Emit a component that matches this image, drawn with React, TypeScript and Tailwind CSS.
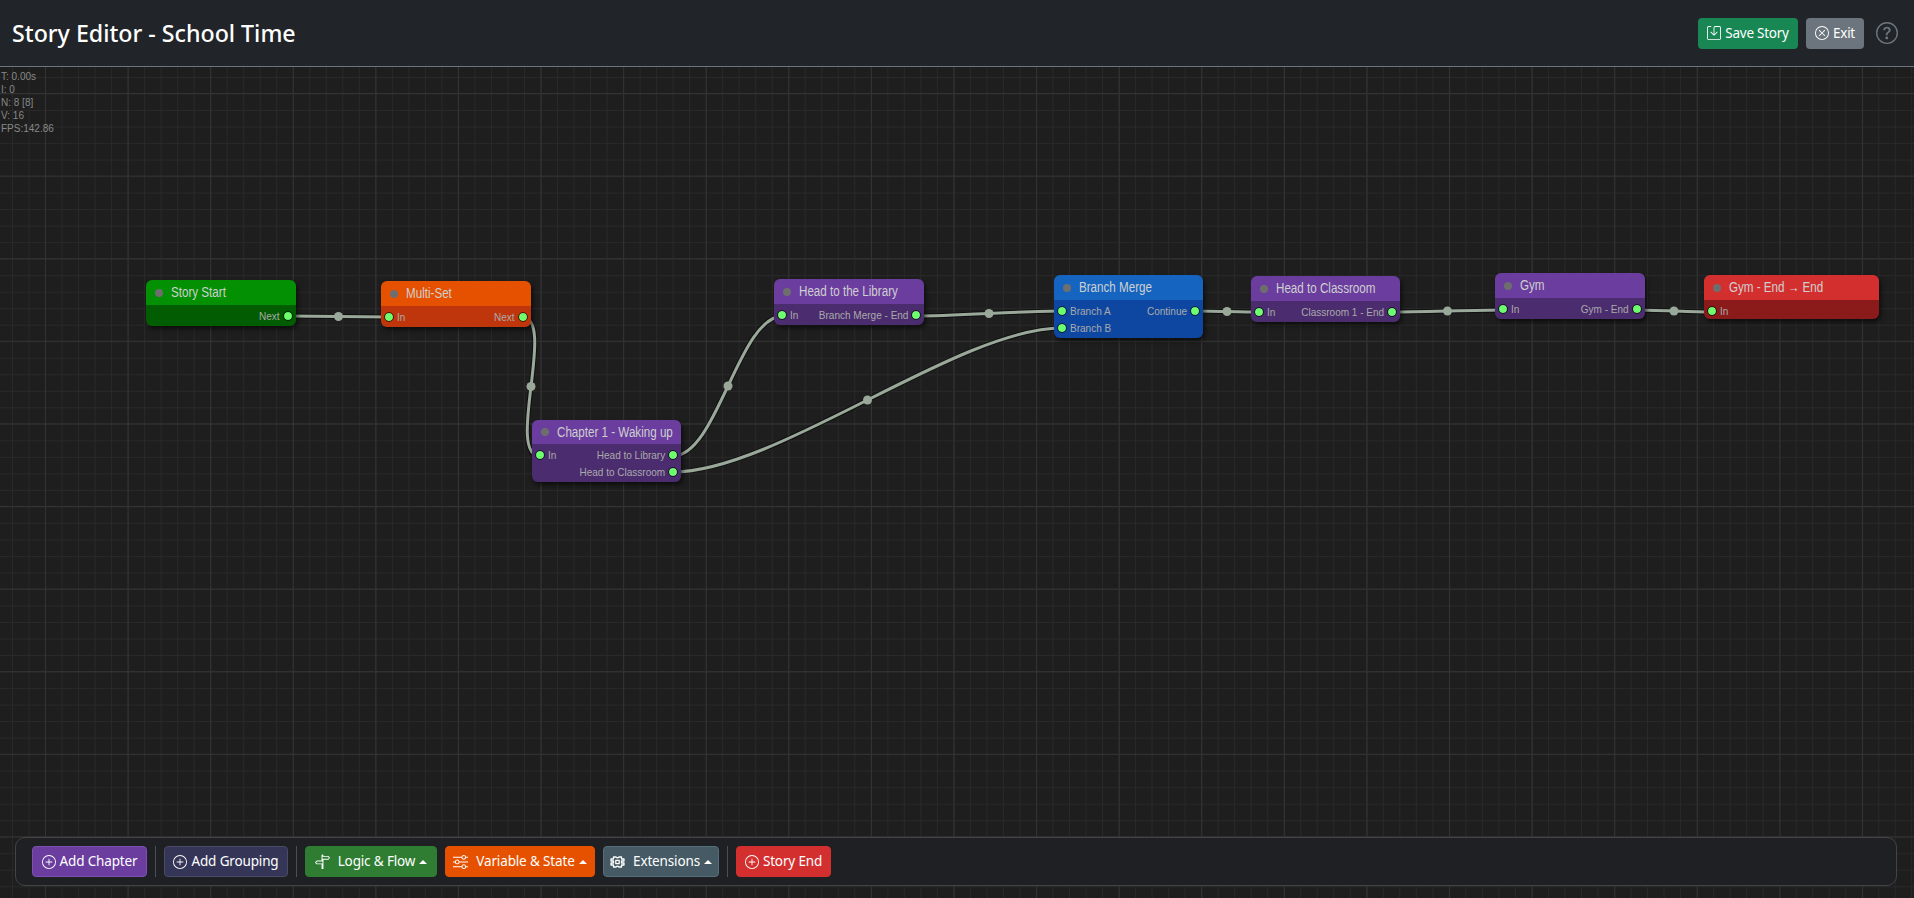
import { BsPlusCircle, BsQuestionCircle, BsSave, BsSignpostSplit, BsSliders, BsXCircle } from 'react-icons/bs'
import type { ReactNode } from 'react'

type Slot = { x: number; y: number }
type NodeData = {
  title: string
  x: number
  y: number
  w: number
  h: number
  head: number
  bar: string
  body: string
  ins?: string[]
  outs?: string[]
}

const nodes: NodeData[] = [
  { title: 'Story Start', x: 146, y: 280, w: 150, h: 46, head: 25, bar: 'bg-[#039003]', body: 'bg-[#025c02]', outs: ['Next'] },
  { title: 'Multi-Set', x: 381, y: 281, w: 150, h: 46, head: 25, bar: 'bg-[#e65100]', body: 'bg-[#bf360c]', ins: ['In'], outs: ['Next'] },
  { title: 'Chapter 1 - Waking up', x: 532, y: 420, w: 149, h: 62, head: 24, bar: 'bg-[#6a3d9f]', body: 'bg-[#4a2c6f]', ins: ['In'], outs: ['Head to Library', 'Head to Classroom'] },
  { title: 'Head to the Library', x: 774, y: 279, w: 150, h: 46, head: 25, bar: 'bg-[#6a3d9f]', body: 'bg-[#4a2c6f]', ins: ['In'], outs: ['Branch Merge - End'] },
  { title: 'Branch Merge', x: 1054, y: 275, w: 149, h: 63, head: 25, bar: 'bg-[#1565c0]', body: 'bg-[#0d47a1]', ins: ['Branch A', 'Branch B'], outs: ['Continue'] },
  { title: 'Head to Classroom', x: 1251, y: 276, w: 149, h: 46, head: 25, bar: 'bg-[#6a3d9f]', body: 'bg-[#4a2c6f]', ins: ['In'], outs: ['Classroom 1 - End'] },
  { title: 'Gym', x: 1495, y: 273, w: 150, h: 46, head: 25, bar: 'bg-[#6a3d9f]', body: 'bg-[#4a2c6f]', ins: ['In'], outs: ['Gym - End'] },
  { title: 'Gym - End → End', x: 1704, y: 275, w: 175, h: 44, head: 25, bar: 'bg-[#d32f2f]', body: 'bg-[#8b1a1a]', ins: ['In'] },
]

const links: [Slot, Slot][] = [
  [{ x: 288, y: 316 }, { x: 389, y: 317 }],
  [{ x: 522, y: 317 }, { x: 540, y: 456 }],
  [{ x: 673, y: 456 }, { x: 783, y: 316 }],
  [{ x: 673, y: 472 }, { x: 1062, y: 328 }],
  [{ x: 916, y: 316 }, { x: 1062, y: 311 }],
  [{ x: 1195, y: 311 }, { x: 1259, y: 312 }],
  [{ x: 1392, y: 312 }, { x: 1503, y: 310 }],
  [{ x: 1636, y: 310 }, { x: 1712, y: 312 }],
]

function Links() {
  return (
    <svg className="absolute inset-0 w-full h-full" width="1914" height="898">
      {links.map(([a, b], i) => {
        const dist = Math.hypot(b.x - a.x, b.y - a.y)
        const c1 = a.x + dist * 0.25
        const c2 = b.x - dist * 0.25
        const d = `M${a.x} ${a.y} C${c1} ${a.y} ${c2} ${b.y} ${b.x} ${b.y}`
        const mx = (a.x + 3 * c1 + 3 * c2 + b.x) / 8
        const my = (a.y + b.y) / 2
        return (
          <g key={i}>
            <path d={d} fill="none" stroke="#000" strokeOpacity="0.5" strokeWidth="5" />
            <path d={d} fill="none" stroke="#9aa89a" strokeWidth="3" />
            <circle cx={mx} cy={my} r="4.5" fill="#9aa89a" />
          </g>
        )
      })}
    </svg>
  )
}

// no matching icon in the packages, drawn by hand
function ExtensionIcon() {
  return (
    <svg className="w-[15px] h-[12px]" viewBox="0 0 15 12" fill="none" stroke="currentColor" strokeWidth="1.3" strokeLinejoin="round">
      <path d="M3.5 1H6Q7.5 2.6 9 1H11.5V3H14V5H11.5V7H14V9H11.5V11H9Q7.5 9.4 6 11H3.5V9H1V7H3.5V5H1V3H3.5Z" />
      <rect x="5.8" y="4.4" width="3.4" height="3.2" />
    </svg>
  )
}

function Dot() {
  return <span className="w-[8px] h-[8px] rounded-full bg-[#6dff6d] outline outline-1 outline-black/60 shrink-0" />
}

function GraphNode({ n }: { n: NodeData }) {
  return (
    <div
      className="absolute rounded-[6px] overflow-hidden shadow-[2px_3px_4px_rgba(0,0,0,0.55)] flex flex-col [font-family:'Liberation_Sans',sans-serif]"
      style={{ left: n.x, top: n.y, width: n.w, height: n.h }}
    >
      <div className={`${n.bar} flex items-center pl-[9px] gap-[8px] text-[14px] text-[#cfcfcf] shrink-0`} style={{ height: n.head }}>
        <span className="w-[8px] h-[8px] rounded-full bg-[#6e6e6e] shrink-0" />
        <span className="whitespace-nowrap origin-left scale-x-[0.83]">{n.title}</span>
      </div>
      <div className={`${n.body} flex-1 flex justify-between px-[4px] pt-[3px] text-[11px] text-[#aaaaaa]`}>
        <div className="flex flex-col">
          {n.ins?.map((s) => (
            <div key={s} className="h-[16.5px] flex items-center gap-[4px]">
              <Dot />
              <span className="whitespace-nowrap origin-left scale-x-[0.91]">{s}</span>
            </div>
          ))}
        </div>
        <div className="flex flex-col items-end">
          {n.outs?.map((s) => (
            <div key={s} className="h-[16.5px] flex items-center gap-[4px]">
              <span className="whitespace-nowrap origin-right scale-x-[0.91]">{s}</span>
              <Dot />
            </div>
          ))}
        </div>
      </div>
    </div>
  )
}

function ToolButton({ color, icon, label, caret }: { color: string; icon: ReactNode; label: string; caret?: boolean }) {
  return (
    <button className={`${color} h-[31px] rounded-[4px] border flex items-center justify-center gap-[4px] text-[13.5px] tracking-[-0.15px] text-white whitespace-nowrap`}>
      {icon}
      <span>{label}</span>
      {caret && <span className="w-0 h-0 border-x-[4px] border-x-transparent border-b-[4px] border-b-white" />}
    </button>
  )
}

export default function App() {
  return (
    <div className="relative w-[1914px] h-[898px] overflow-hidden bg-[#1e1e1e] [font-family:'Noto_Sans',sans-serif]">
      <header className="h-[67px] bg-[#212529] border-b border-[#6c757d] flex items-center pl-[12px] pr-[16px]">
        <h1 className="text-[23.2px] font-medium text-white flex-1">Story Editor - School Time</h1>
        <button className="w-[100px] h-[31px] rounded-[4px] bg-[#198754] text-white text-[13.5px] tracking-[-0.25px] flex items-center justify-center gap-[4px]">
          <BsSave className="w-[14px] h-[14px]" />
          Save Story
        </button>
        <button className="ml-[8px] w-[58px] h-[31px] rounded-[4px] bg-[#6c757d] text-white text-[13.5px] tracking-[-0.25px] flex items-center justify-center gap-[4px]">
          <BsXCircle className="w-[14px] h-[14px]" />
          Exit
        </button>
        <BsQuestionCircle className="ml-[12px] w-[22px] h-[22px] text-[#6c757d]" />
      </header>
      <main className="absolute left-0 right-0 top-[67px] bottom-0 bg-[linear-gradient(#333333_1px,transparent_1px),linear-gradient(90deg,#333333_1px,transparent_1px),linear-gradient(#292929_1px,transparent_1px),linear-gradient(90deg,#292929_1px,transparent_1px)] bg-[size:82.6px_82.6px,82.6px_82.6px,16.52px_16.52px,16.52px_16.52px] bg-[position:0_26px,45px_0,0_10px,12px_0]">
        <div className="absolute left-[1px] top-[3px] text-[10px] leading-[13px] text-[#888888] [font-family:'Liberation_Sans',sans-serif]">
          <div>T: 0.00s</div>
          <div>I: 0</div>
          <div>N: 8 [8]</div>
          <div>V: 16</div>
          <div>FPS:142.86</div>
        </div>
      </main>
      <Links />
      {nodes.map((n) => (
        <GraphNode key={n.title} n={n} />
      ))}
      <footer className="absolute left-[15px] right-[17px] top-[837px] h-[49px] rounded-[10px] border border-[#444444] bg-[#1f2023] flex items-center pl-[16px] gap-[8px]">
        <ToolButton color="w-[115px] bg-[#6a3d9f] border-[#7d4fb3]" icon={<BsPlusCircle className="w-[14px] h-[14px]" />} label="Add Chapter" />
        <span className="w-px h-[31px] bg-[#495057]" />
        <ToolButton color="w-[124px] bg-[#343557] border-[#484a66]" icon={<BsPlusCircle className="w-[14px] h-[14px]" />} label="Add Grouping" />
        <span className="w-px h-[31px] bg-[#495057]" />
        <ToolButton color="w-[132px] bg-[#2e7d32] border-[#2e7d32]" icon={<BsSignpostSplit className="w-[15px] h-[15px] mr-[4px]" />} label="Logic & Flow" caret />
        <ToolButton color="w-[150px] bg-[#e65100] border-[#e65100]" icon={<BsSliders className="w-[15px] h-[15px] mr-[4px]" />} label="Variable & State" caret />
        <ToolButton color="w-[116px] bg-[#455a64] border-[#546e7a]" icon={<span className="mr-[4px]"><ExtensionIcon /></span>} label="Extensions" caret />
        <span className="w-px h-[31px] bg-[#495057]" />
        <ToolButton color="w-[95px] bg-[#d32f2f] border-[#d32f2f]" icon={<BsPlusCircle className="w-[14px] h-[14px]" />} label="Story End" />
      </footer>
    </div>
  )
}
